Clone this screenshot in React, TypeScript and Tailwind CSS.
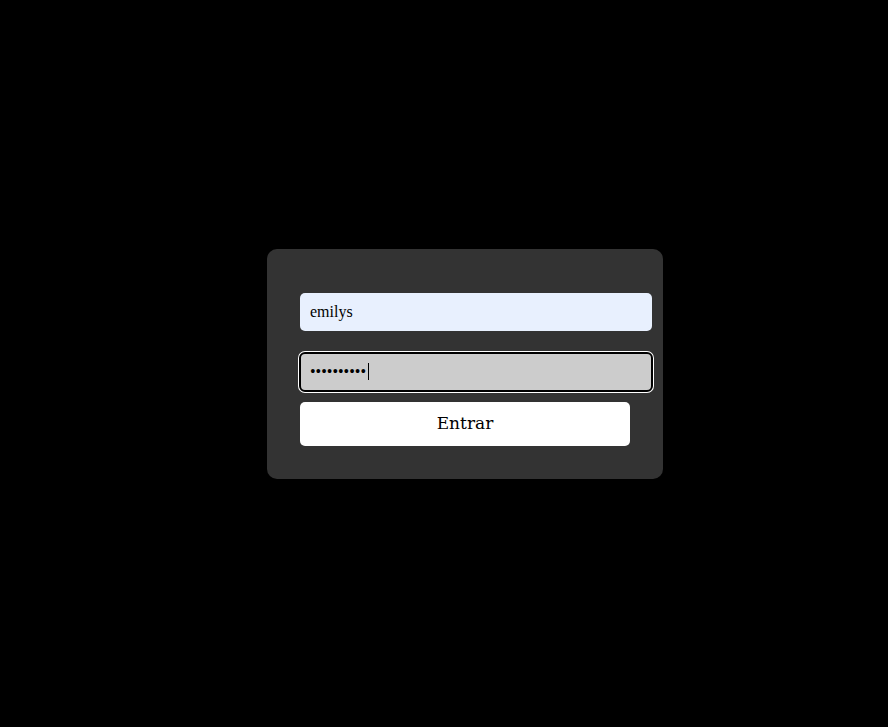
export default function App() {
  return (
    <div className="min-h-screen w-full bg-black flex items-center justify-center font-['Liberation_Serif',serif]">
      <form
        className="w-[396px] bg-[#333333] rounded-[10px] pt-[44px] pb-[33px] pl-[33px] pr-[11px] flex flex-col mt-[1px] ml-[42px]"
        onSubmit={(e) => e.preventDefault()}
      >
        <input
          type="text"
          defaultValue="emilys"
          className="h-[38px] w-[352px] rounded-[5px] bg-[#e8f0fe] px-[10px] text-[16px] text-black outline-none"
        />
        <div className="relative mt-[22px]">
          <input
            type="password"
            defaultValue="emilyspass"
            className="h-[38px] w-[352px] rounded-[5px] bg-[#cccccc] px-[10px] text-[16px] text-black outline-2 outline-solid outline-black -outline-offset-1 shadow-[0_0_0_2px_white]"
          />
          {/* text caret */}
          <span className="absolute left-[68px] top-[10px] h-[17px] w-px bg-black" />
        </div>
        <button
          type="submit"
          className="mt-[11px] h-[44px] w-[330px] rounded-[5px] bg-white font-['DejaVu_Serif',serif] text-[17px] text-black"
        >
          Entrar
        </button>
      </form>
    </div>
  );
}
